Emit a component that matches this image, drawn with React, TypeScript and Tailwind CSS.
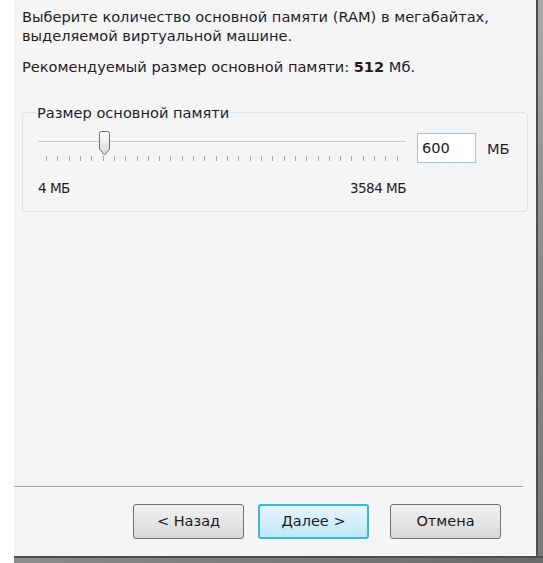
import React from "react";

const TICKS = Array.from({ length: 32 }, (_, i) => i);

function Thumb() {
    return (
        <svg width="13" height="25" viewBox="0 0 13 25" className="absolute left-[60px] top-[-1px]">
            <defs>
                <linearGradient id="tg" x1="0" y1="0" x2="0" y2="1">
                    <stop offset="0" stopColor="#ffffff" />
                    <stop offset="1" stopColor="#d9d9d9" />
                </linearGradient>
            </defs>
            <path d="M1.5 2.5 Q1.5 0.5 3.5 0.5 L9.5 0.5 Q11.5 0.5 11.5 2.5 L11.5 18 L6.5 24 L1.5 18 Z" fill="url(#tg)" stroke="#707070" strokeWidth="1" />
        </svg>
    );
}

function WizButton({ label, primary, extra }: { label: string; primary?: boolean; extra?: string }) {
    return (
        <button
            className={
                (primary
                    ? "w-[111px] h-[35px] rounded-[3px] border-2 border-[#3cb7d8] bg-gradient-to-b from-[#e8f6fd] to-[#bfe6f7] text-[14.5px] text-[#1a1a1a]"
                    : "w-[111px] h-[35px] rounded-[3px] border border-[#707070] bg-gradient-to-b from-[#f2f2f2] to-[#d8d8d8] text-[14.5px] text-[#1a1a1a]") +
                " " + (extra ?? "")
            }
        >
            {label}
        </button>
    );
}

export default function App() {
    return (
        <div className="w-[543px] h-[563px] flex bg-white font-['DejaVu_Sans',sans-serif] text-[#1e1e1e] overflow-hidden">
            {/* left strip */}
            <div className="w-[14px] h-full bg-white" />

            <div className="flex-1 flex flex-col">
                <div className="flex-1 flex">
                    {/* page */}
                    <div className="flex-1 bg-[#f5f5f5] flex flex-col">
                        <div className="px-[8px] pt-[7px] text-[14.6px] leading-[19px]">
                            <p>Выберите количество основной памяти (RAM) в мегабайтах, выделяемой виртуальной машине.</p>
                            <p className="mt-[12px]">
                                Рекомендуемый размер основной памяти: <b>512</b> Мб.
                            </p>
                        </div>

                        <fieldset className="mx-[8px] mt-[28px] h-[108px] rounded-[4px] border border-[#dde3e8] pl-[15px] pr-[16px]">
                            <legend className="ml-[-2px] px-[1px] text-[14.6px] leading-[17px]">Размер основной памяти</legend>
                            <div className="flex items-start mt-[11px]">
                                <div className="w-[368px] flex flex-col">
                                    <div className="relative h-[17px] flex items-start">
                                        <div className="mt-[9px] w-full h-[2px] bg-[#c9c9c9] border-b border-[#f9f9f9]" />
                                        <Thumb />
                                    </div>
                                    <div className="flex justify-between px-[8px] mt-[7px]">
                                        {TICKS.map(t => (
                                            <div key={t} className="w-[1px] h-[5px] bg-[#a7a7a7]" />
                                        ))}
                                    </div>
                                    <div className="flex justify-between mt-[19px] text-[13.5px] leading-[16px] tracking-[-0.5px]">
                                        <span>4 МБ</span>
                                        <span>3584 МБ</span>
                                    </div>
                                </div>
                                <div className="ml-[11px] mt-[1px] w-[59px] h-[30px] border border-[#abc1d0] bg-white text-[14.6px] leading-[27px] pl-[4px]">600</div>
                                <span className="ml-[11px] mt-[6px] text-[14.6px]">МБ</span>
                            </div>
                        </fieldset>

                        <div className="flex-1" />

                        <div className="mr-[13px] h-[2px] border-t border-[#a0a0a0] bg-white" />
                        <div className="h-[68px] flex items-start justify-end gap-[14px] pt-[16px] pr-[35px]">
                            <WizButton label="< Назад" />
                            <WizButton label="Далее >" primary />
                            <WizButton label="Отмена" extra="ml-[7px]" />
                        </div>
                    </div>
                    {/* right frame */}
                    <div className="w-[7px] flex">
                        <div className="w-[2px] bg-[#4d4d4d]" />
                        <div className="flex-1 bg-gradient-to-b from-[#a9a9a9] via-[#8a8a8a] to-[#7a7a7a]" />
                    </div>
                </div>
                {/* bottom frame */}
                <div className="h-[7px] flex flex-col">
                    <div className="h-[2px] bg-[#4d4d4d]" />
                    <div className="flex-1 bg-gradient-to-r from-[#8c8c8c] via-[#7a7a7a] to-[#6a6a6a]" />
                </div>
            </div>
        </div>
    );
}
